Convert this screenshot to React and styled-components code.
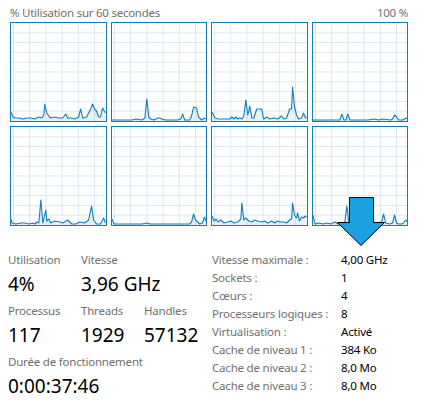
import React from 'react';
import styled, { createGlobalStyle } from 'styled-components';

const GlobalStyle = createGlobalStyle`
  html, body {
    margin: 0;
    padding: 0;
    background: #ffffff;
  }
  body {
    font-family: "Noto Sans", "Open Sans", sans-serif;
    width: 427px;
    height: 413px;
    overflow: hidden;
  }
`;

const Page = styled.div`
  position: relative;
  width: 427px;
  height: 413px;
  background: #fff;
`;

const Top = styled.section`
  width: 398px;
  padding: 5px 0 0 10px;
`;

const Header = styled.div`
  display: flex;
  justify-content: space-between;
  font-size: 11.5px;
  letter-spacing: -0.25px;
  line-height: 16px;
  color: #707070;
  margin-bottom: 1px;
`;

const GraphGrid = styled.div`
  display: grid;
  grid-template-columns: repeat(4, 1fr);
  grid-template-rows: repeat(2, 100px);
  gap: 4px;
`;

const GraphBox = styled.div`
  border: 1px solid #117dbb;
  background: #fff;
  overflow: hidden;

  svg {
    display: block;
    width: 100%;
    height: 100%;
  }
`;

const Stats = styled.section`
  display: flex;
  margin-top: 26px;
`;

const LeftPanel = styled.div`
  width: 212px;
  flex: none;
  padding-left: 8px;
  box-sizing: border-box;
  display: flex;
  flex-direction: column;
  gap: 7px;
`;

const StatRow = styled.div`
  display: grid;
  grid-template-columns: 73px 63px auto;
`;

const Stat = styled.div`
  display: flex;
  flex-direction: column;
`;

const Label = styled.span`
  font-size: 11.5px;
  letter-spacing: -0.2px;
  line-height: 16px;
  color: #707070;
  white-space: nowrap;
`;

const Value = styled.span`
  margin-top: 4px;
  font-size: 19px;
  line-height: 24px;
  color: #000;
  white-space: nowrap;
`;

const RightPanel = styled.dl`
  margin: -1px 0 0 0;
  display: grid;
  grid-template-columns: 129px auto;
  grid-auto-rows: 18px;
  font-size: 11.5px;
  letter-spacing: -0.2px;
  line-height: 18px;
`;

const Key = styled.dt`
  color: #707070;
  white-space: nowrap;
`;

const Val = styled.dd`
  margin: 0;
  color: #000;
  white-space: nowrap;
`;

const Arrow = styled.svg`
  position: absolute;
  left: 336px;
  top: 196px;
`;

const W = 95;
const H = 98;

const graphs = [
  [[0,9],[2,4],[4,3],[8,3],[12,2],[16,3],[20,3],[24,2],[28,4],[31,3],[33,6],[34,17],[36,8],[38,5],[40,3],[44,4],[48,3],[52,3],[55,7],[57,3],[60,3],[64,2],[68,4],[70,12],[72,3],[76,4],[78,8],[80,12],[82,17],[84,12],[86,10],[88,4],[90,4],[92,13],[95,8]],
  [[0,1],[4,1],[10,1],[20,1],[24,2],[30,1],[33,3],[35,22],[37,4],[39,2],[42,1],[46,3],[48,3],[50,2],[54,1],[58,1],[62,1],[66,1],[69,2],[71,7],[73,1],[78,1],[80,5],[82,14],[85,13],[87,4],[90,1],[93,3],[95,2]],
  [[0,9],[3,3],[6,2],[10,2],[14,2],[18,2],[20,4],[22,2],[24,4],[26,2],[28,3],[30,2],[32,5],[34,21],[36,6],[38,15],[40,3],[42,3],[45,12],[50,12],[52,2],[55,4],[58,2],[62,3],[66,2],[70,5],[72,2],[75,3],[78,12],[80,12],[81,34],[83,14],[85,6],[87,2],[90,3],[92,8],[94,3],[95,4]],
  [[0,1],[10,1],[20,1],[27,1],[29,7],[31,1],[33,1],[35,7],[37,1],[45,1],[55,1],[62,2],[66,1],[70,2],[78,1],[80,2],[82,6],[84,4],[86,1],[90,1],[92,2],[94,3],[95,2]],
  [[0,6],[1,2],[5,1],[10,2],[14,2],[18,1],[22,2],[24,1],[26,3],[28,2],[30,25],[32,2],[35,15],[36,4],[38,6],[40,2],[44,4],[49,3],[52,2],[57,5],[61,1],[65,1],[69,3],[74,2],[78,5],[81,19],[83,5],[86,1],[90,1],[93,7],[95,2]],
  [[0,6],[2,1],[10,1],[20,1],[30,1],[36,2],[38,1],[50,1],[60,1],[70,1],[78,1],[80,3],[82,11],[84,5],[86,3],[88,1],[91,2],[93,8],[95,3]],
  [[0,9],[2,4],[4,6],[6,3],[9,5],[12,2],[16,3],[19,4],[22,2],[26,3],[29,6],[30,22],[32,5],[34,7],[37,4],[40,3],[43,5],[46,4],[50,3],[53,4],[56,2],[60,4],[63,2],[66,4],[69,3],[72,3],[75,2],[78,5],[80,6],[81,22],[83,10],[85,7],[86,12],[88,4],[90,8],[92,7],[94,9],[95,8]],
  [[0,10],[2,1],[6,2],[10,1],[14,2],[18,1],[22,3],[25,1],[28,2],[32,3],[34,19],[36,3],[40,2],[45,1],[50,1],[55,2],[60,1],[66,2],[69,3],[71,11],[73,2],[77,1],[80,2],[82,10],[84,2],[86,1],[89,1],[91,2],[93,5],[95,3]],
];

const CpuGraph = ({ data }) => {
  const line = data.map(([x, h]) => `${x},${H - h}`).join(' ');
  const area = `0,${H} ${line} ${W},${H}`;
  const vLines = [0, 1, 2, 3, 4, 5].map((k) => 2.5 + k * 16.3);
  const hLines = [1, 2, 3, 4, 5, 6, 7, 8, 9].map((k) => k * 9.8);
  return (
    <GraphBox>
      <svg viewBox={`0 0 ${W} ${H}`} preserveAspectRatio="none">
        <g stroke="#d9eaf4" strokeWidth="1" shapeRendering="crispEdges">
          {vLines.map((x) => (
            <line key={`v${x}`} x1={x} y1="0" x2={x} y2={H} />
          ))}
          {hLines.map((y) => (
            <line key={`h${y}`} x1="0" y1={y} x2={W} y2={y} />
          ))}
        </g>
        <polygon points={area} fill="#117dbb" fillOpacity="0.1" />
        <polyline points={line} fill="none" stroke="#117dbb" strokeWidth="1.1" strokeLinejoin="round" />
      </svg>
    </GraphBox>
  );
};

const specs = [
  ['Vitesse maximale :', '4,00 GHz'],
  ['Sockets :', '1'],
  ['Cœurs :', '4'],
  ['Processeurs logiques :', '8'],
  ['Virtualisation :', 'Activé'],
  ['Cache de niveau 1 :', '384 Ko'],
  ['Cache de niveau 2 :', '8,0 Mo'],
  ['Cache de niveau 3 :', '8,0 Mo'],
];

const App = () => {
  return (
    <Page>
      <GlobalStyle />
      <Top>
        <Header>
          <span>% Utilisation sur 60 secondes</span>
          <span>100 %</span>
        </Header>
        <GraphGrid>
          {graphs.map((d, i) => (
            <CpuGraph key={i} data={d} />
          ))}
        </GraphGrid>
      </Top>

      <Stats>
        <LeftPanel>
          <StatRow>
            <Stat>
              <Label>Utilisation</Label>
              <Value>4%</Value>
            </Stat>
            <Stat>
              <Label>Vitesse</Label>
              <Value>3,96 GHz</Value>
            </Stat>
          </StatRow>
          <StatRow>
            <Stat>
              <Label>Processus</Label>
              <Value>117</Value>
            </Stat>
            <Stat>
              <Label>Threads</Label>
              <Value>1929</Value>
            </Stat>
            <Stat>
              <Label>Handles</Label>
              <Value>57132</Value>
            </Stat>
          </StatRow>
          <StatRow>
            <Stat>
              <Label>Durée de fonctionnement</Label>
              <Value>0:00:37:46</Value>
            </Stat>
          </StatRow>
        </LeftPanel>

        <RightPanel>
          {specs.map(([k, v]) => (
            <React.Fragment key={k}>
              <Key>{k}</Key>
              <Val>{v}</Val>
            </React.Fragment>
          ))}
        </RightPanel>
      </Stats>

      <Arrow width="50" height="52" viewBox="0 0 50 52">
        <polygon
          points="13.5,1.5 37.5,1.5 37.5,26.5 48.5,26.5 25,49.5 1.5,26.5 13.5,26.5"
          fill="#1ba1e2"
          stroke="#000"
          strokeWidth="1"
          strokeLinejoin="miter"
        />
      </Arrow>
    </Page>
  );
};

export default App;
